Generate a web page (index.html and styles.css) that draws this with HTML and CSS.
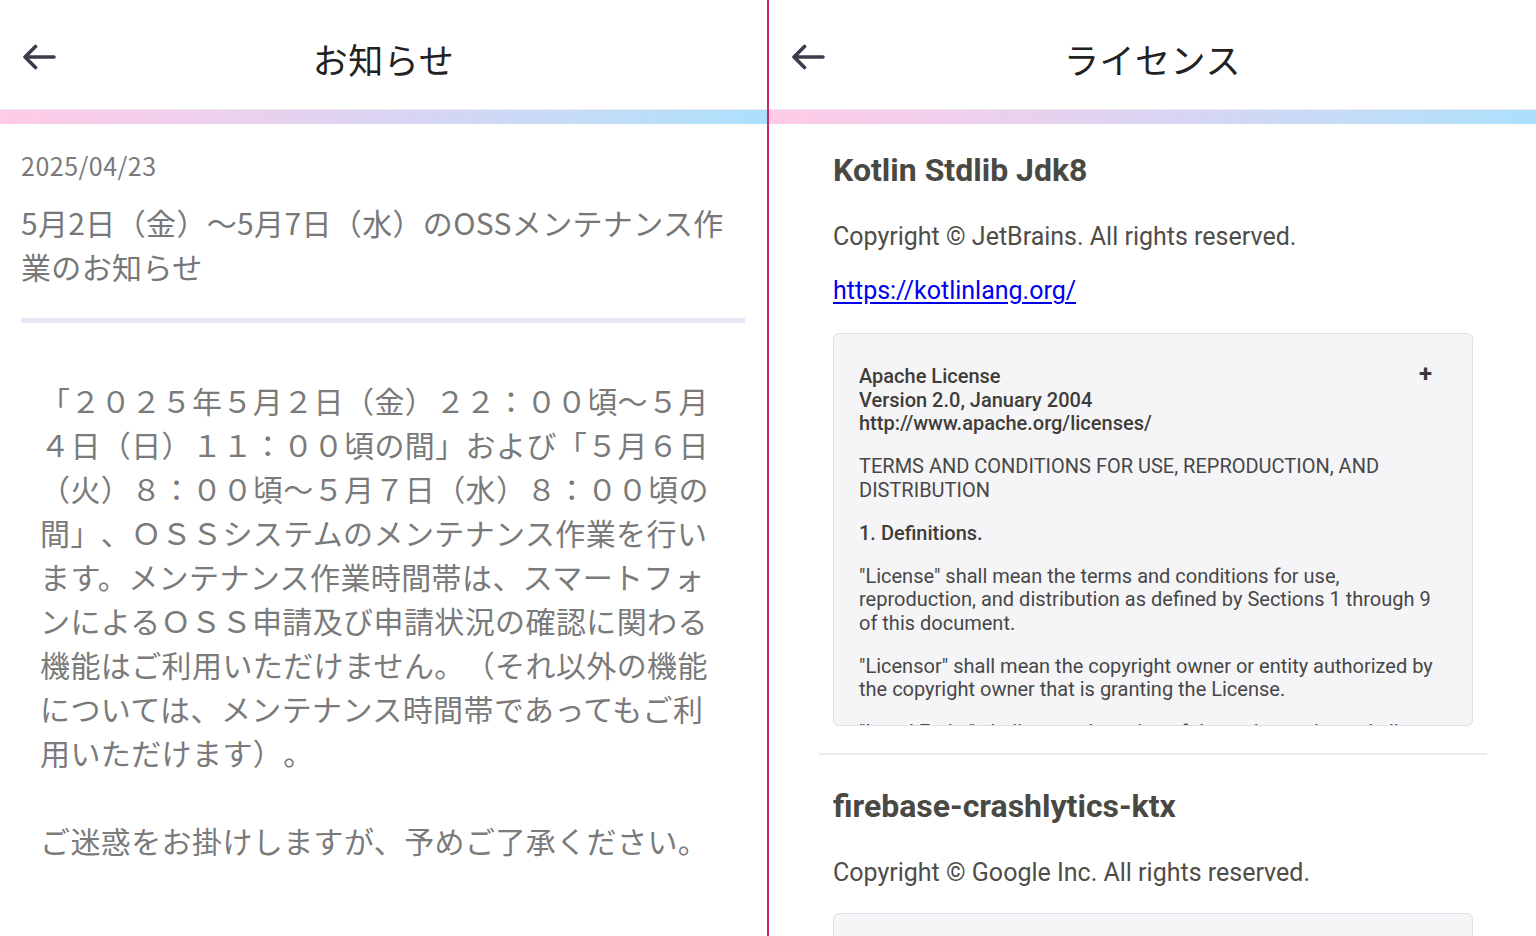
FILE: index.html
```html
<!DOCTYPE html>
<html lang="ja">
<head>
<meta charset="utf-8">
<title>お知らせ / ライセンス</title>
<link rel="stylesheet" href="styles.css">
</head>
<body>
<div class="screens">
  <section class="panel">
    <header class="appbar">
      <span class="back">
        <svg width="34" height="26" viewBox="0 0 34 26"><path d="M32 13H3M13.5 2.5L3 13l10.5 10.5" fill="none" stroke="#3d3c4c" stroke-width="3.6" stroke-linecap="round" stroke-linejoin="round"/></svg>
      </span>
      <h1 class="appbar-title">お知らせ</h1>
      <span></span>
    </header>
    <div class="grad"></div>
    <div class="notice">
      <div class="notice-date">2025/04/23</div>
      <h2 class="notice-title">5月2日（金）～5月7日（水）のOSSメンテナンス作業のお知らせ</h2>
      <div class="notice-rule"></div>
      <div class="notice-body">
        <p>「２０２５年５月２日（金）２２：００頃～５月４日（日）１１：００頃の間」および「５月６日（火）８：００頃～５月７日（水）８：００頃の間」、ＯＳＳシステムのメンテナンス作業を行います。メンテナンス作業時間帯は、スマートフォンによるＯＳＳ申請及び申請状況の確認に関わる機能はご利用いただけません。（それ以外の機能については、メンテナンス時間帯であってもご利用いただけます）。</p>
        <p>ご迷惑をお掛けしますが、予めご了承ください。</p>
      </div>
    </div>
  </section>
  <div class="divider"></div>
  <section class="panel">
    <header class="appbar">
      <span class="back">
        <svg width="34" height="26" viewBox="0 0 34 26"><path d="M32 13H3M13.5 2.5L3 13l10.5 10.5" fill="none" stroke="#3d3c4c" stroke-width="3.6" stroke-linecap="round" stroke-linejoin="round"/></svg>
      </span>
      <h1 class="appbar-title">ライセンス</h1>
      <span></span>
    </header>
    <div class="grad"></div>
    <div class="licenses">
      <article class="lib">
        <h2 class="lib-name">Kotlin Stdlib Jdk8</h2>
        <p class="lib-copy">Copyright © JetBrains. All rights reserved.</p>
        <p class="lib-link"><a href="#">https://kotlinlang.org/</a></p>
        <div class="lic-box">
          <span class="lic-toggle">+</span>
          <p class="b">Apache License<br>Version 2.0, January 2004<br>http://www.apache.org/licenses/</p>
          <p>TERMS AND CONDITIONS FOR USE, REPRODUCTION, AND DISTRIBUTION</p>
          <p class="b">1. Definitions.</p>
          <p>"License" shall mean the terms and conditions for use, reproduction, and distribution as defined by Sections 1 through 9 of this document.</p>
          <p>"Licensor" shall mean the copyright owner or entity authorized by the copyright owner that is granting the License.</p>
          <p>"Legal Entity" shall mean the union of the acting entity and all other entities that control, are controlled by, or are under common control with that entity.</p>
        </div>
      </article>
      <article class="lib">
        <h2 class="lib-name">firebase-crashlytics-ktx</h2>
        <p class="lib-copy">Copyright © Google Inc. All rights reserved.</p>
        <div class="lic-box">
          <span class="lic-toggle">+</span>
          <p class="b">Apache License<br>Version 2.0, January 2004<br>http://www.apache.org/licenses/</p>
        </div>
      </article>
    </div>
  </section>
</div>
</body>
</html>
```
FILE: styles.css
```css
* { box-sizing: border-box; }
html, body { margin: 0; padding: 0; }
body {
  width: 1536px;
  height: 936px;
  overflow: hidden;
  background: #fff;
  font-family: "Noto Sans CJK JP", "Noto Sans", sans-serif;
}
.screens {
  display: flex;
  height: 936px;
}
.panel {
  width: 767px;
  flex: 0 0 767px;
  height: 936px;
  overflow: hidden;
  display: flex;
  flex-direction: column;
}
.panel > * { flex-shrink: 0; }
.divider {
  width: 2px;
  flex: 0 0 2px;
  background: #c8246e;
}
.appbar {
  height: 110px;
  display: grid;
  grid-template-columns: 1fr auto 1fr;
  align-items: center;
  border-bottom: 1px solid #eeeaee;
  padding-top: 8px;
}
.back {
  padding-left: 22px;
  display: flex;
  align-items: center;
  margin-top: -3px;
}
.appbar-title {
  margin: 0;
  font-weight: 400;
  font-size: 35px;
  color: #222;
  letter-spacing: 0.5px;
  line-height: 40px;
}
.grad {
  height: 14px;
  background: linear-gradient(90deg, #ffcbe7 0%, #e8d1ef 35%, #d6d5f4 55%, #c6dcf7 75%, #abe0fc 100%);
}

/* notice */
.notice {
  padding: 0 22px 0 21px;
  text-spacing-trim: space-all;
}
.notice-date {
  margin-top: 26px;
  font-size: 25px;
  line-height: 30px;
  letter-spacing: 0.5px;
  color: #7a7a7a;
}
.notice-title {
  margin: 20px 0 0;
  font-weight: 400;
  font-size: 30px;
  line-height: 44px;
  letter-spacing: 0.35px;
  color: #777;
}
.notice-rule {
  margin-top: 30px;
  height: 5px;
  background: #e7e7f5;
}
.notice-body {
  padding: 0 0 0 19px;
  width: 690px;
  margin-top: 55px;
  color: #7a7a7a;
  font-size: 30px;
  line-height: 44px;
  letter-spacing: 0.4px;
}
.notice-body p {
  margin: 0 0 44px;
}

/* licenses */
.licenses {
  margin: 0 49px 0 50px;
  font-family: Roboto, "Liberation Sans", sans-serif;
}
.lib {
  padding: 33px 14px 27px;
  border-bottom: 2px solid #ececec;
}
.lib:first-child {
  padding-top: 28px;
}
.lib-name {
  margin: 0 0 35px;
  font-size: 32px;
  line-height: 36px;
  font-weight: 700;
  color: #4a4843;
}
.lib-copy, .lib-link {
  margin: 0 0 26px;
  font-size: 25px;
  line-height: 28px;
  color: #4f4d47;
}
.lib-link { margin-bottom: 28px; }
.lib-link a {
  color: #0000ee;
  text-decoration: underline;
  text-underline-offset: 3px;
}
.lic-box {
  position: relative;
  height: 393px;
  overflow: hidden;
  background: #f5f5f8;
  border: 1px solid #dfdfe7;
  border-radius: 6px;
  padding: 31px 26px 0 25px;
  font-size: 20px;
  line-height: 23.5px;
  color: #474747;
}
.lic-box p {
  margin: 0 0 19.5px;
}
.lic-box .b {
  font-weight: 500;
  color: #3f3d38;
}
.lic-toggle {
  position: absolute;
  top: 28px;
  right: 40px;
  font-size: 24px;
  line-height: 24px;
  font-weight: 700;
  color: #3a3a3a;
}
```
